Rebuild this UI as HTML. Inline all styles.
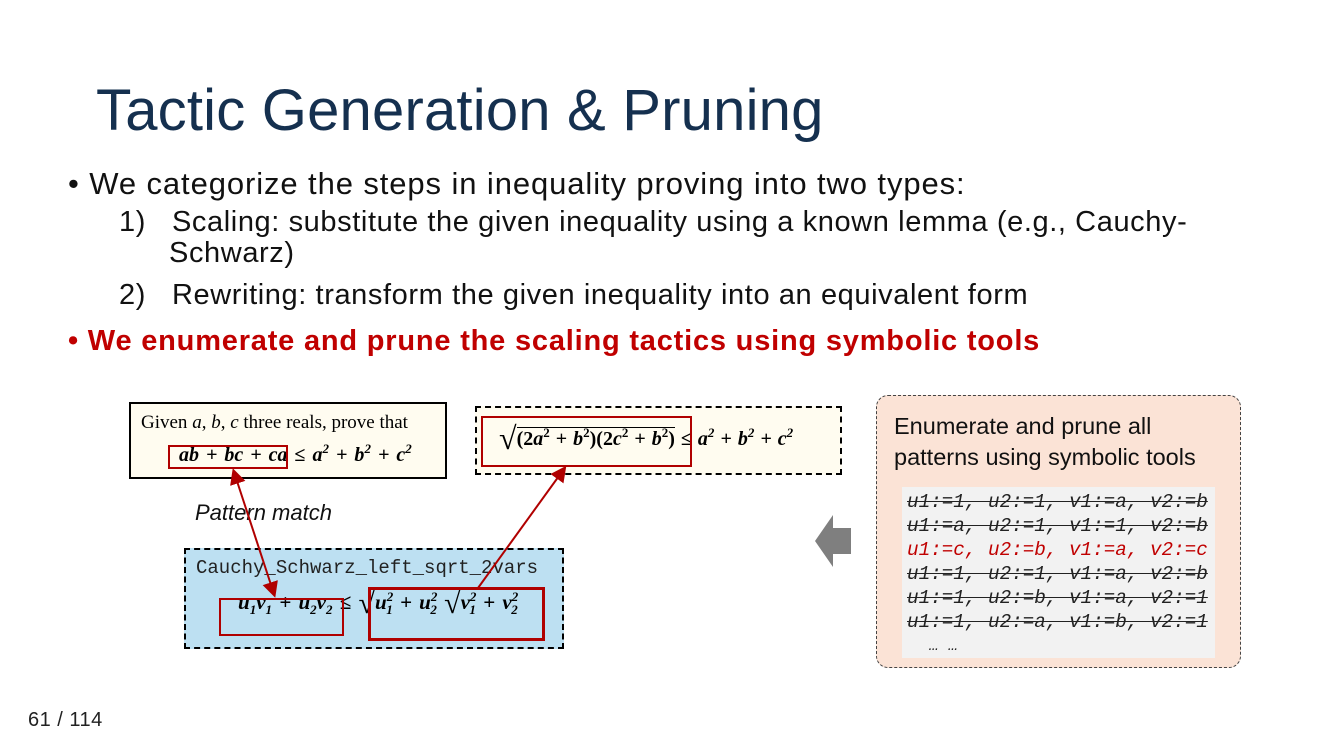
<!DOCTYPE html>
<html><head><meta charset="utf-8"><style>
body{margin:0;width:1334px;height:750px;background:#fff;position:relative;overflow:hidden;font-family:"Liberation Sans",sans-serif}
.a{position:absolute;white-space:nowrap}
.ser{font-family:"Liberation Serif",serif}
.mono{font-family:"Liberation Mono",monospace}
.code div{height:24px;line-height:24px}
.s{text-decoration:line-through}
sup{font-size:13px;vertical-align:8px;line-height:0}
sub{font-size:13px;vertical-align:-5px;line-height:0}
</style></head><body>
<div class="a" style="left:96px;top:77px;font-size:58px;color:#15304f;letter-spacing:0.2px">Tactic Generation &amp; Pruning</div>
<div class="a" style="left:68px;top:166px;font-size:31px;color:#111;letter-spacing:0.9px">•&nbsp;We categorize the steps in inequality proving into two types:</div>
<div class="a" style="left:119px;top:207px;font-size:29px;color:#111;line-height:31px;letter-spacing:0.6px">1)&nbsp;&nbsp; Scaling: substitute the given inequality using a known lemma (e.g., Cauchy-<br><span style="padding-left:50px">Schwarz)</span></div>
<div class="a" style="left:119px;top:279px;font-size:29px;color:#111;letter-spacing:0.6px">2)&nbsp;&nbsp; Rewriting: transform the given inequality into an equivalent form</div>
<div class="a" style="left:68px;top:325px;font-size:29px;color:#c00000;font-weight:bold;letter-spacing:0.8px">•&nbsp;We enumerate and prune the scaling tactics using symbolic tools</div>

<div class="a ser" style="left:129px;top:402px;width:314px;height:73px;border:2px solid #000;background:#fffcf0;font-size:19px">
<div style="position:absolute;left:10px;top:8px">Given <i>a</i>, <i>b</i>, <i>c</i> three reals, prove that</div>
<div style="position:absolute;left:48px;top:40px;font-weight:bold;font-style:italic;font-size:20px;word-spacing:2px">ab + bc + ca <span style="font-style:normal">≤</span> a<sup>2</sup> + b<sup>2</sup> + c<sup>2</sup></div>
</div>
<div class="a" style="left:168px;top:445px;width:116px;height:20px;border:2px solid #b00000"></div>

<div class="a ser" style="left:475px;top:406px;width:363px;height:65px;border:2px dashed #000;background:#fffcf0;font-size:20px;font-weight:bold;font-style:italic;word-spacing:1px">
<div style="position:absolute;left:22px;top:12px"><span style="font-size:32px;font-style:normal;font-weight:normal;vertical-align:-4px">√</span><span style="border-top:1px solid #000;font-style:normal">(2<i>a</i><sup>2</sup> + <i>b</i><sup>2</sup>)(2<i>c</i><sup>2</sup> + <i>b</i><sup>2</sup>)</span> <span style="font-style:normal">≤</span> a<sup>2</sup> + b<sup>2</sup> + c<sup>2</sup></div>
</div>
<div class="a" style="left:481px;top:416px;width:207px;height:47px;border:2px solid #b00000"></div>

<div class="a" style="left:195px;top:500px;font-size:22px;font-style:italic;color:#111">Pattern match</div>

<div class="a" style="left:184px;top:548px;width:376px;height:97px;border:2px dashed #000;background:#bde0f2">
<div class="a mono" style="left:10px;top:7px;font-size:19px;color:#222">Cauchy_Schwarz_left_sqrt_2vars</div>
<div class="a ser" style="left:52px;top:37px;font-size:21px;font-weight:bold;font-style:italic;word-spacing:2px">u<sub>1</sub>v<sub>1</sub> + u<sub>2</sub>v<sub>2</sub> <span style="font-style:normal">≤</span> <span style="font-size:30px;font-style:normal;font-weight:normal;vertical-align:-4px">√</span><span style="border-top:1px solid #000">u<sup>2</sup><sub style="margin-left:-7px">1</sub> + u<sup>2</sup><sub style="margin-left:-7px">2</sub></span> <span style="font-size:30px;font-style:normal;font-weight:normal;vertical-align:-4px">√</span><span style="border-top:1px solid #000">v<sup>2</sup><sub style="margin-left:-7px">1</sub> + v<sup>2</sup><sub style="margin-left:-7px">2</sub></span></div>
</div>
<div class="a" style="left:219px;top:598px;width:121px;height:34px;border:2px solid #b00000"></div>
<div class="a" style="left:368px;top:587px;width:171px;height:48px;border:3px solid #b00000"></div>

<svg class="a" style="left:0;top:0" width="1334" height="750">
<defs><marker id="m" markerWidth="8" markerHeight="8" refX="6" refY="4" orient="auto-start-reverse"><path d="M0,0 L8,4 L0,8 z" fill="#b00000"/></marker></defs>
<line x1="234" y1="472" x2="274" y2="594" stroke="#b00000" stroke-width="2" marker-start="url(#m)" marker-end="url(#m)"/>
<line x1="478" y1="588" x2="564" y2="469" stroke="#b00000" stroke-width="2" marker-end="url(#m)"/>
<path d="M815,541 L833,515 L833,528 L851,528 L851,554 L833,554 L833,567 z" fill="#7f7f7f"/>
</svg>

<div class="a" style="left:876px;top:395px;width:363px;height:271px;border:1.5px dashed #444;border-radius:12px;background:#fbe3d6">
<div class="a" style="left:17px;top:15px;font-size:23.5px;line-height:31px;color:#111">Enumerate and prune all<br>patterns using symbolic tools</div>
<div class="a code mono" style="left:25px;top:91px;width:313px;height:171px;background:#f2f2f2;font-size:19.3px;font-style:italic;color:#222;padding-left:5px;box-sizing:border-box;padding-top:3px">
<div class="s">u1:=1, u2:=1, v1:=a, v2:=b</div>
<div class="s">u1:=a, u2:=1, v1:=1, v2:=b</div>
<div style="color:#c00000">u1:=c, u2:=b, v1:=a, v2:=c</div>
<div class="s">u1:=1, u2:=1, v1:=a, v2:=b</div>
<div class="s">u1:=1, u2:=b, v1:=a, v2:=1</div>
<div class="s">u1:=1, u2:=a, v1:=b, v2:=1</div>
<div style="padding-left:22px;font-size:16px">… …</div>
</div>
</div>

<div class="a" style="left:28px;top:709px;font-size:20px;color:#222;letter-spacing:0.5px">61 / 114</div>
</body></html>
